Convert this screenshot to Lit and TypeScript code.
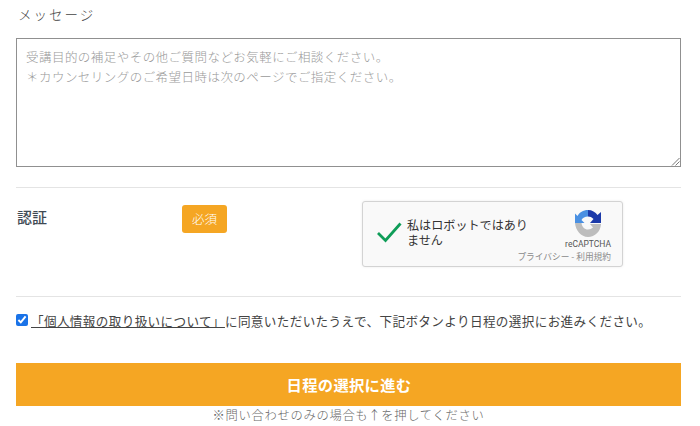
import { LitElement, html, css } from "lit";
import { customElement } from "lit/decorators.js";

@customElement("app-root")
export class AppRoot extends LitElement {
  static styles = css`
    :host { display: block; width: 700px; height: 426px; overflow: hidden; background: #fff; font-family: "Noto Sans CJK JP", serif; color: #333; }
    .page { padding: 0 19px 0 16px; display: flex; flex-direction: column; }
    .label { height: 38px; font-size: 13.5px; line-height: 29px; letter-spacing: 2px; color: #444; padding-left: 2px; font-weight: 300; }
    .area { box-sizing: border-box; height: 129px; border: 1px solid #8f8f8f; padding: 8px 9px; font-size: 12.5px; line-height: 20px; letter-spacing: .46px; color: #999; position: relative; font-weight: 300; white-space: nowrap; opacity: .99; }
    .grip { position: absolute; right: 0; bottom: 0; width: 9px; height: 9px; }
    .rule { height: 1px; background: #e4e4e4; }
    .rule.a { margin-top: 20px; }
    .auth { display: flex; height: 108px; box-sizing: border-box; padding-top: 14px; align-items: flex-start; }
    .auth h3 { margin: 4px 0 0 1px; width: 165px; font-size: 15px; line-height: 22px; font-weight: 500; color: #3f4a54; }
    .req { width: 45px; height: 28px; margin-top: 3px; background: #f5a623; border-radius: 3px; color: #fff; font-size: 12.5px; line-height: 28px; text-align: center; font-weight: 300; }
    .captcha { box-sizing: border-box; margin: -1px 0 0 135px; width: 261px; height: 66px; background: #f9f9f9; border: 1px solid #d3d3d3; border-radius: 3px; box-shadow: 0 0 3px rgba(0,0,0,.08); display: flex; position: relative; }
    .captcha .check { margin: 17px 0 0 13px; width: 26px; height: 26px; flex: none; }
    .captcha .txt { margin: 15px 0 0 5px; width: 125px; font-size: 12.1px; line-height: 15px; color: #333; font-weight: 400; }
    .brand { position: absolute; right: 12px; top: 7px; display: flex; flex-direction: column; align-items: flex-end; }
    .brand svg { margin-right: 8px; }
    .brand .rc { font-family: Roboto, "Liberation Sans", sans-serif; font-size: 8.5px; line-height: 11px; color: #555; margin-top: 2px; margin-right: -1px; }
    .brand .links { font-size: 8.7px; line-height: 12px; color: #8a8a8a; margin-top: 1px; white-space: nowrap; margin-right: -1px; }
    .agree { display: flex; align-items: center; height: 66px; padding-bottom: 20px; box-sizing: border-box; font-size: 12.6px; letter-spacing: .36px; color: #444; white-space: nowrap; }
    .agree input { margin: 0 3px 0 0; width: 12px; height: 12px; accent-color: #1a73e8; flex: none; }
    .agree a { color: #444; text-decoration: underline; }
    .btn { height: 43px; background: #f5a623; color: #fff; border: 0; font-family: inherit; font-size: 15.3px; font-weight: 700; letter-spacing: .3px; padding: 0 0 2px 1px; }
    .note { text-align: center; font-size: 12.3px; line-height: 19px; letter-spacing: .68px; color: #666; font-weight: 300; opacity: .99; }
  `;

  render() {
    return html`<div class="page">
      <div class="label">メッセージ</div>
      <div class="area">受講目的の補足やその他ご質問などお気軽にご相談ください。<br />＊カウンセリングのご希望日時は次のページでご指定ください。
        <svg class="grip" viewBox="0 0 9 9"><path d="M8.5 1 1 8.5M8.5 4.500 4.500 8.500" stroke="#777" stroke-width="1" fill="none" /></svg>
      </div>
      <div class="rule a"></div>
      <div class="auth">
        <h3>認証</h3>
        <div class="req">必須</div>
        <div class="captcha">
          <svg class="check" viewBox="0 0 26 26"><path d="M2 14 9.500 21.500 24.500 4.500" stroke="#0f9d58" stroke-width="2.800" fill="none" /></svg>
          <div class="txt">私はロボットではありません</div>
          <div class="brand">
            <svg width="28" height="28" viewBox="0 0 28 28">
              <path d="M14 1C9 1 5.500 3.500 3.500 7L1 4.500V14h9.500L7.500 11C8.500 8.800 11 7.500 14 7.500z" fill="#4a90e2" />
              <path d="M14 1c4 0 7.500 2 9.500 5L27 3v11h-11l3.500-4C18 8.300 16 7.500 14 7.500z" fill="#1c3aa9" />
              <path d="M1 14h6.500c.5 4 3 6.500 6.500 6.500 2 0 3.500-.8 5-2l-3-3.500h11c-.5 7.500-6 13-13 13S1.500 21 1 14z" fill="#bdbdbd" />
            </svg>
            <div class="rc">reCAPTCHA</div>
            <div class="links">プライバシー - 利用規約</div>
          </div>
        </div>
      </div>
      <div class="rule"></div>
      <label class="agree"><input type="checkbox" checked /><span><a href="#">「個人情報の取り扱いについて」</a>に同意いただいたうえで、下記ボタンより日程の選択にお進みください。</span></label>
      <button class="btn">日程の選択に進む</button>
      <div class="note">※問い合わせのみの場合も↑を押してください</div>
    </div>`;
  }
}
